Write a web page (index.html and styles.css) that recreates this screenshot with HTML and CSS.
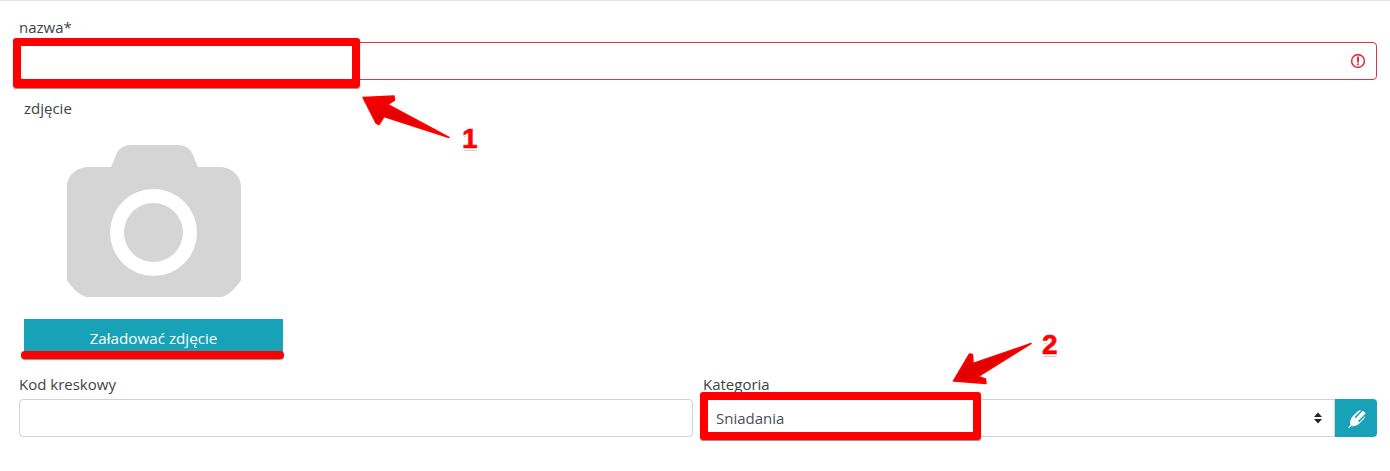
FILE: index.html
```html
<!DOCTYPE html>
<html lang="pl">
<head>
<meta charset="utf-8">
<title>Produkt</title>
<link rel="stylesheet" href="styles.css">
</head>
<body>
<main class="form">
  <div class="field-name">
    <label class="label">nazwa*</label>
    <div class="input-wrap">
      <input class="input input-invalid" type="text">
      <svg class="error-icon" width="16" height="16" viewBox="0 0 16 16"><circle cx="8" cy="8" r="6.4" fill="none" stroke="#dc3545" stroke-width="1.6"/><path d="M8 4.2v4.6" stroke="#dc3545" stroke-width="2" stroke-linecap="round"/><circle cx="8" cy="11.2" r="1.05" fill="#dc3545"/></svg>
    </div>
  </div>
  <section class="photo">
    <label class="label">zdjęcie</label>
    <svg class="camera" width="174" height="152" viewBox="0 0 174 152">
      <path fill-rule="evenodd" fill="#d5d5d5" d="M44 22 L48.5 11.5 C51 4 56 0 64 0 H111 C119 0 124 4 126.5 11.5 L131 22 H152 C165 22 174 31 174 42 V135 C169 143 163 149 155 152 H19 C11 149 5 143 0 135 V42 C0 31 9 22 22 22 Z M86.5 44 A43.5 43.5 0 1 0 86.6 131 A43.5 43.5 0 1 0 86.5 44 Z M86.5 58 A29.5 29.5 0 1 1 86.4 117 A29.5 29.5 0 1 1 86.5 58 Z"/>
    </svg>
    <button class="upload" type="button">Załadować zdjęcie</button>
  </section>
  <div class="row">
    <div>
      <label class="label">Kod kreskowy</label>
      <input class="input" type="text">
    </div>
    <div>
      <label class="label label-cat">Kategoria</label>
      <div class="select-group">
        <div class="select-wrap">
          <select class="select"><option>Sniadania</option></select>
          <svg class="select-arrows" width="8" height="12" viewBox="0 0 8 12"><path d="M4 0.5 L8 5 H0 Z M4 11.5 L0 7 H8 Z" fill="#212529"/></svg>
        </div>
        <button class="edit" type="button" aria-label="Edytuj">
          <svg width="18" height="18" viewBox="0 0 18 18"><path fill="#fff" d="M0 17.5 L2.4 15 C1.6 11.5 2.6 8 5.6 5.2 L9.6 1.6 C11.2 0.4 12.2 0.2 13 0.4 L6.6 7 L7.8 8.2 L14.4 0.9 C15.6 1 17 2.2 17.6 3.4 L10 11 L11.2 12.2 L17.2 6 C17 7.4 16 9 14.4 10.6 L11.6 13.2 C8.6 16 5.6 16.6 3.2 16 L1 18 Z"/></svg>
        </button>
      </div>
    </div>
  </div>
</main>

<div class="frame frame-name"></div>
<div class="frame frame-cat"></div>
<div class="underline"></div>
<svg class="arrows" width="1390" height="471" viewBox="0 0 1390 471">
  <defs>
    <linearGradient id="redA" x1="0" y1="0" x2="1" y2="1"><stop offset="0" stop-color="#f00"/><stop offset=".45" stop-color="#e00000"/><stop offset="1" stop-color="#f00"/></linearGradient>
  </defs>
  <path fill="url(#redA)" stroke="#f00" stroke-width="1.5" stroke-linejoin="round" d="M363 97.5 L394 96 L394.5 100 L387.5 104.5 L449 137.5 L384 116.5 L379 124.5 L376 123 Z"/>
  <path fill="url(#redA)" stroke="#f00" stroke-width="1.5" stroke-linejoin="round" d="M953.5 381 L986 383.5 L985.5 379 L978 376.5 L1031 343.5 L973 363.5 L972.5 354.5 L969.5 354 Z"/>
</svg>
<span class="num num-1">1</span>
<span class="num num-2">2</span>
</body>
</html>
```
FILE: styles.css
```css
* { box-sizing: border-box; }
html, body { margin: 0; padding: 0; background: #fff; }
body {
  width: 1390px;
  height: 471px;
  overflow: hidden;
  position: relative;
  font-family: "Open Sans", "Noto Sans", sans-serif;
  font-size: 15px;
  color: #3d4349;
}
.form {
  border-top: 1px solid #e3e3e3;
  padding: 16px 13px 0 19px;
}
.label { display: block; line-height: 20px; height: 25px; }
.input-wrap { position: relative; }
.input {
  display: block;
  width: 100%;
  height: 38px;
  border: 1px solid #ced4da;
  border-radius: 4px;
  background: #fff;
  outline: none;
}
.input-invalid { border-color: #dc3545; }
.error-icon { position: absolute; right: 11px; top: 11px; }
.photo { padding: 18px 0 0 5px; }
.photo .label { height: 47px; line-height: 20px; }
.camera { display: block; margin-left: 43px; }
.upload {
  display: block;
  width: 259px;
  height: 37px;
  margin-top: 22px;
  border: 0;
  background: #17a2b8;
  color: #fff;
  font: inherit;
  font-size: 15.2px;
  padding: 0;
}
.row {
  display: grid;
  grid-template-columns: 674px 1fr;
  column-gap: 7px;
  margin-top: 18px;
}
.label-cat { padding-left: 3px; }
.select-group { display: flex; }
.select-wrap { position: relative; flex: 1; }
.select {
  display: block;
  width: 100%;
  height: 38px;
  padding: 0 15px;
  border: 1px solid #ced4da;
  border-radius: 4px 0 0 4px;
  background: #fff;
  color: #495057;
  font: inherit;
  appearance: none;
  outline: none;
}
.select-arrows { position: absolute; right: 13px; top: 13px; }
.edit {
  width: 42px;
  height: 38px;
  border: 0;
  border-radius: 0 4px 4px 0;
  background: #17a2b8;
  padding: 1px 0 0 2px;
  display: flex;
  align-items: center;
  justify-content: center;
}
.frame {
  position: absolute;
  border: 8px solid #f00;
  border-radius: 3px;
  box-shadow: 0 1px 1px rgba(0, 0, 0, .45);
}
.frame-name { left: 13px; top: 38px; width: 347px; height: 50px; border-bottom-width: 9px; }
.frame-cat { left: 700px; top: 392px; width: 281px; height: 48px; }
.underline {
  position: absolute;
  left: 21px;
  top: 351px;
  width: 263px;
  height: 8px;
  border-radius: 4px;
  background: #f00;
  box-shadow: 0 1px 1px rgba(0, 0, 0, .45);
}
.arrows { position: absolute; left: 0; top: 0; pointer-events: none; }
.num {
  position: absolute;
  font-family: "Liberation Sans", Arial, sans-serif;
  font-weight: 700;
  font-size: 28px;
  line-height: 28px;
  color: #f00;
  -webkit-text-stroke: .6px #f00;
  text-shadow: 1.5px 1.5px 0 #fff, -1.5px 1.5px 0 #fff, 1.5px -1.5px 0 #fff, -1.5px -1.5px 0 #fff, 0 2.5px 1px #ccc;
}
.num-1 { left: 462px; top: 125px; }
.num-2 { left: 1042px; top: 331px; }
```
